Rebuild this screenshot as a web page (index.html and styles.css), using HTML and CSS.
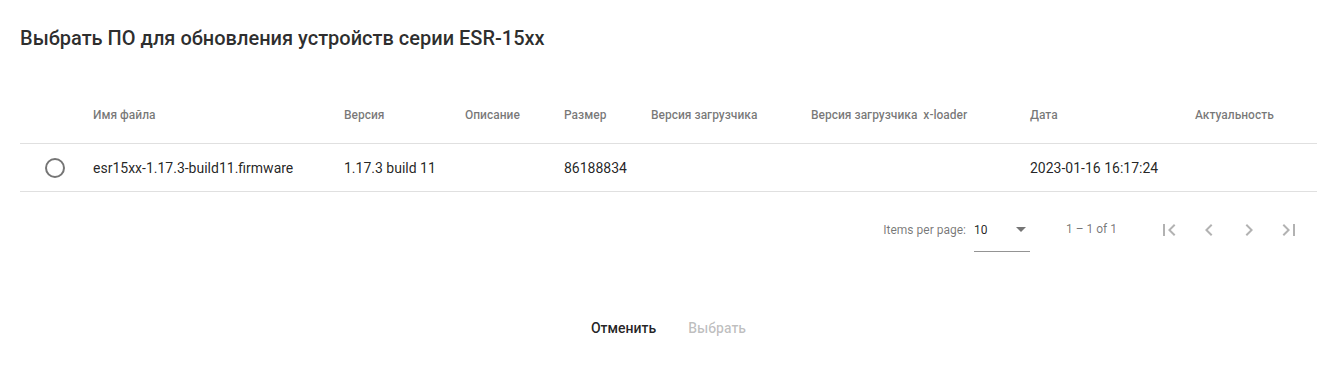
FILE: index.html
```html
<!DOCTYPE html>
<html lang="ru">
<head>
    <meta charset="UTF-8">
    <meta name="viewport" content="width=device-width, initial-scale=1.0">
    <title>Выбрать ПО</title>
    <link rel="stylesheet" href="styles.css">
</head>
<body>
    <div class="dialog">
        <h2 class="dialog-title">Выбрать ПО для обновления устройств серии ESR-15xx</h2>

        <table class="fw-table">
            <colgroup>
                <col class="c-radio">
                <col class="c-name">
                <col class="c-ver">
                <col class="c-desc">
                <col class="c-size">
                <col class="c-boot">
                <col class="c-xload">
                <col class="c-date">
                <col class="c-actual">
            </colgroup>
            <thead>
                <tr>
                    <th></th>
                    <th>Имя файла</th>
                    <th>Версия</th>
                    <th>Описание</th>
                    <th>Размер</th>
                    <th>Версия загрузчика</th>
                    <th>Версия загрузчика&nbsp; x-loader</th>
                    <th>Дата</th>
                    <th>Актуальность</th>
                </tr>
            </thead>
            <tbody>
                <tr>
                    <td><span class="radio"></span></td>
                    <td>esr15xx-1.17.3-build11.firmware</td>
                    <td>1.17.3 build 11</td>
                    <td></td>
                    <td>86188834</td>
                    <td></td>
                    <td></td>
                    <td>2023-01-16 16:17:24</td>
                    <td></td>
                </tr>
            </tbody>
        </table>

        <div class="paginator">
            <span class="pg-label">Items per page:</span>
            <div class="pg-select">
                <span class="pg-value">10</span>
                <span class="pg-arrow"></span>
            </div>
            <span class="pg-range">1 – 1 of 1</span>
            <div class="pg-buttons">
                <button class="icon-btn" disabled>
                    <svg viewBox="0 0 24 24"><path d="M18.41 16.59L13.82 12l4.59-4.59L17 6l-6 6 6 6zM6 6h2v12H6z"/></svg>
                </button>
                <button class="icon-btn" disabled>
                    <svg viewBox="0 0 24 24"><path d="M15.41 7.41L14 6l-6 6 6 6 1.41-1.41L10.83 12z"/></svg>
                </button>
                <button class="icon-btn" disabled>
                    <svg viewBox="0 0 24 24"><path d="M10 6L8.59 7.41 13.17 12l-4.58 4.59L10 18l6-6z"/></svg>
                </button>
                <button class="icon-btn" disabled>
                    <svg viewBox="0 0 24 24"><path d="M5.59 7.41L10.18 12l-4.59 4.59L7 18l6-6-6-6zM16 6h2v12h-2z"/></svg>
                </button>
            </div>
        </div>

        <div class="actions">
            <button class="text-btn">Отменить</button>
            <button class="text-btn" disabled>Выбрать</button>
        </div>
    </div>
</body>
</html>
```

FILE: styles.css
```css
* {
    margin: 0;
    padding: 0;
    box-sizing: border-box;
    font-family: Roboto, 'Liberation Sans', sans-serif;
}

body {
    background: #fff;
    color: rgba(0, 0, 0, .87);
}

.dialog {
    padding: 22px 20px 0;
}

.dialog-title {
    font-size: 20px;
    font-weight: 500;
    line-height: 32px;
    color: rgba(0, 0, 0, .84);
    margin-bottom: 33px;
}

/* table */
.fw-table {
    width: 100%;
    table-layout: fixed;
    border-collapse: collapse;
}

.c-radio { width: 73px; }
.c-name { width: 251px; }
.c-ver { width: 121px; }
.c-desc { width: 99px; }
.c-size { width: 87px; }
.c-boot { width: 160px; }
.c-xload { width: 219px; }
.c-date { width: 165px; }

.fw-table th {
    height: 56px;
    text-align: left;
    font-size: 12px;
    font-weight: 500;
    color: rgba(0, 0, 0, .54);
    white-space: nowrap;
    border-bottom: 1px solid rgba(0, 0, 0, .12);
    vertical-align: middle;
}

.fw-table td {
    height: 48px;
    padding-top: 1px;
    font-size: 14px;
    color: rgba(0, 0, 0, .87);
    white-space: nowrap;
    border-bottom: 1px solid rgba(0, 0, 0, .12);
    vertical-align: middle;
}

.fw-table td:first-child {
    padding-left: 25px;
}

.radio {
    display: block;
    width: 20px;
    height: 20px;
    border: 2px solid rgba(0, 0, 0, .54);
    border-radius: 50%;
}

/* paginator */
.paginator {
    display: flex;
    align-items: center;
    justify-content: flex-end;
    min-height: 56px;
    margin-top: 10px;
    padding: 0 8px;
    font-size: 12px;
    color: rgba(0, 0, 0, .54);
}

.pg-label {
    margin-right: 8px;
}

.pg-select {
    width: 56px;
    height: 43px;
    display: flex;
    align-items: center;
    justify-content: space-between;
    border-bottom: 1px solid rgba(0, 0, 0, .42);
    margin-top: 1px;
    font-size: 12px;
    color: rgba(0, 0, 0, .87);
}

.pg-arrow {
    width: 0;
    height: 0;
    border-left: 5px solid transparent;
    border-right: 5px solid transparent;
    border-top: 5px solid rgba(0, 0, 0, .54);
    margin-right: 4px;
}

.pg-range {
    margin: -2px 32px 0 36px;
    font-size: 12px;
}

.pg-buttons {
    display: flex;
}

.icon-btn {
    width: 40px;
    height: 40px;
    border: none;
    background: none;
    display: flex;
    align-items: center;
    justify-content: center;
}

.icon-btn svg {
    width: 24px;
    height: 24px;
    fill: rgba(0, 0, 0, .3);
}

/* actions */
.actions {
    display: flex;
    justify-content: center;
    padding: 8px 0;
    margin-top: 44px;
}

.text-btn {
    height: 36px;
    min-width: 64px;
    padding: 0 16px;
    border: none;
    background: none;
    font-size: 14px;
    font-weight: 500;
    color: rgba(0, 0, 0, .87);
}

.text-btn:disabled {
    color: rgba(0, 0, 0, .26);
}
```
